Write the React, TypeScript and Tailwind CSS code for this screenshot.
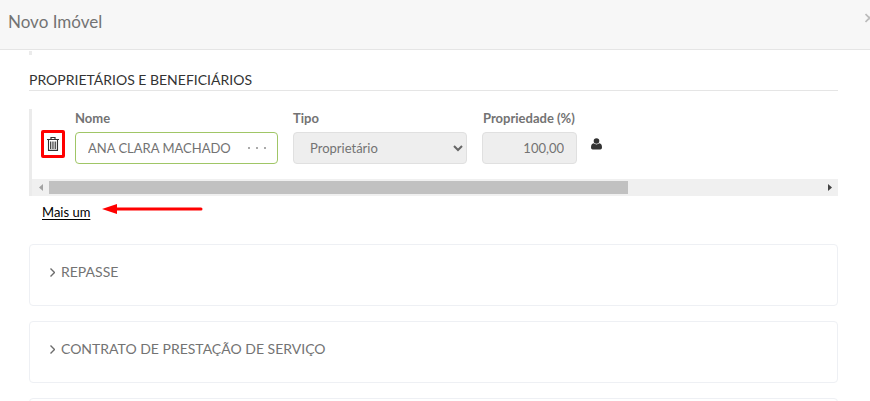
const sections = ["REPASSE", "CONTRATO DE PRESTAÇÃO DE SERVIÇO"]

function TrashIcon() {
  return (
    <svg width="12" height="14" viewBox="0 0 12 14" fill="none" stroke="#333" aria-hidden="true">
      <path d="M0 2.5h12M4 2V.5h4V2" strokeWidth="1.2" />
      <path d="M1.5 3v10.4h9V3" strokeWidth="1.1" />
      <path d="M3.5 4.5v7.5M5.2 4.5v7.5M6.9 4.5v7.5M8.6 4.5v7.5" strokeWidth="0.9" />
    </svg>
  )
}

function PersonIcon() {
  return (
    <svg width="11" height="12" viewBox="0 0 11 12" fill="#333" aria-hidden="true">
      <circle cx="5.5" cy="3" r="2.8" />
      <path d="M2.6 5.3Q5.5 7.6 8.4 5.3Q11 5.8 11 9.5Q11 11.5 9.3 11.5H1.7Q0 11.5 0 9.5Q0 5.8 2.6 5.3Z" />
    </svg>
  )
}

function ScrollBar() {
  return (
    <div className="flex h-[17px] items-center bg-[#f0f0f0]">
      <button type="button" aria-label="Rolar para a esquerda" className="flex w-[17px] justify-center">
        <svg width="4" height="7" viewBox="0 0 4 7" fill="#a3a3a3"><path d="M4 0v7L0 3.5Z" /></svg>
      </button>
      <div className="flex-1">
        <div className="h-[13px] w-3/4 bg-[#c1c1c1]" />
      </div>
      <button type="button" aria-label="Rolar para a direita" className="flex w-[17px] justify-center">
        <svg width="4" height="7" viewBox="0 0 4 7" fill="#444"><path d="M0 0v7l4-3.5Z" /></svg>
      </button>
    </div>
  )
}

export default function App() {
  return (
    <div className="h-screen overflow-hidden bg-white font-['Lato',sans-serif] text-[13px]/5 text-[#737373]">
      <header className="flex h-[50px] items-center justify-between border-b border-[#e5e5e5] bg-[#f7f7f7] pb-1.5 pl-2">
        <h1 className="text-[17px]">Novo Imóvel</h1>
        <button type="button" aria-label="Fechar" className="-mr-1 pb-2">
          <svg width="9" height="10" viewBox="0 0 9 10" fill="none" stroke="#bbb" strokeWidth="1.7">
            <path d="m.5 1 8 8m0-8-8 8" />
          </svg>
        </button>
      </header>

      <main className="pt-px pr-8 pl-[29px]">
        <div className="h-1 w-[3px] bg-[#ebebeb]" />

        <h2 className="mt-[15px] border-b border-[#e5e5e5] text-sm text-[#333]">PROPRIETÁRIOS E BENEFICIÁRIOS</h2>

        <div className="mt-[18px] border-l-[3px] border-[#ebebeb]">
          <div className="flex items-start pb-[15px] pl-[9px]">
            <button
              type="button"
              aria-label="Remover proprietário"
              className="mt-[21px] mr-2.5 flex h-7 w-6 items-center justify-center rounded-xs border-[3px] border-[#f00]"
            >
              <TrashIcon />
            </button>
            <div className="mr-[15px] w-[203px]">
              <label htmlFor="nome" className="mb-[5px] block leading-[18px] font-bold">Nome</label>
              <div className="flex h-8 items-center rounded border border-[#a0c666] pr-2.5 pl-3">
                <input id="nome" defaultValue="ANA CLARA MACHADO" className="w-0 flex-1 outline-none" />
                <button type="button" aria-label="Buscar nome">
                  <svg width="20" height="2" viewBox="0 0 20 2" fill="#aaa"><path d="M1 0h2v2H1zM9 0h2v2H9zM17 0h2v2h-2z" /></svg>
                </button>
              </div>
            </div>
            <div className="mr-[15px] w-[174px]">
              <label htmlFor="tipo" className="mb-[5px] block leading-[18px] font-bold">Tipo</label>
              <div className="grid items-center">
                <select
                  id="tipo"
                  disabled
                  className="col-start-1 row-start-1 h-8 w-full appearance-none rounded border border-[#e0e0e0] bg-[#eee] pl-4 opacity-100"
                >
                  <option>Proprietário</option>
                </select>
                <svg
                  className="pointer-events-none col-start-1 row-start-1 mr-1 justify-self-end"
                  width="10"
                  height="7"
                  viewBox="0 0 10 7"
                  fill="none"
                  stroke="#666"
                  strokeWidth="2"
                >
                  <path d="m1 1 4 4 4-4" />
                </svg>
              </div>
            </div>
            <div className="mr-3.5 w-[95px]">
              <label htmlFor="propriedade" className="mb-[5px] block pl-px leading-[18px] font-bold whitespace-nowrap">Propriedade (%)</label>
              <input
                id="propriedade"
                disabled
                defaultValue="100,00"
                className="block h-8 w-full rounded border border-[#e0e0e0] bg-[#eee] pr-3 text-right"
              />
            </div>
            <button type="button" aria-label="Ver pessoa" className="mt-[29px]">
              <PersonIcon />
            </button>
          </div>
          <ScrollBar />
        </div>

        <div className="mt-1.5 flex items-start pl-[13px]">
          <a href="#mais-um" className="mr-3 text-black underline underline-offset-2">Mais um</a>
          <svg className="mt-0.5" width="101" height="10" viewBox="0 0 101 10" aria-hidden="true">
            <path d="M12 5h87" stroke="#f00" strokeWidth="3" strokeLinecap="round" />
            <path d="M0 5 15 0v10Z" fill="#f00" />
          </svg>
        </div>

        <div className="mt-[22px] space-y-[15px]">
          {sections.map((title) => (
            <section key={title} className="h-[62px] rounded border border-[#eef0f4] pt-[17px] pl-5">
              <button type="button" className="flex items-center gap-1.5 text-sm">
                <svg width="5" height="9" viewBox="0 0 5 9" fill="none" stroke="#6c6c6c" strokeWidth="1.4">
                  <path d="m.5.5 4 4-4 4" />
                </svg>
                {title}
              </button>
            </section>
          ))}
          <section className="h-[62px] rounded border border-[#eef0f4]" />
        </div>
      </main>
    </div>
  )
}
